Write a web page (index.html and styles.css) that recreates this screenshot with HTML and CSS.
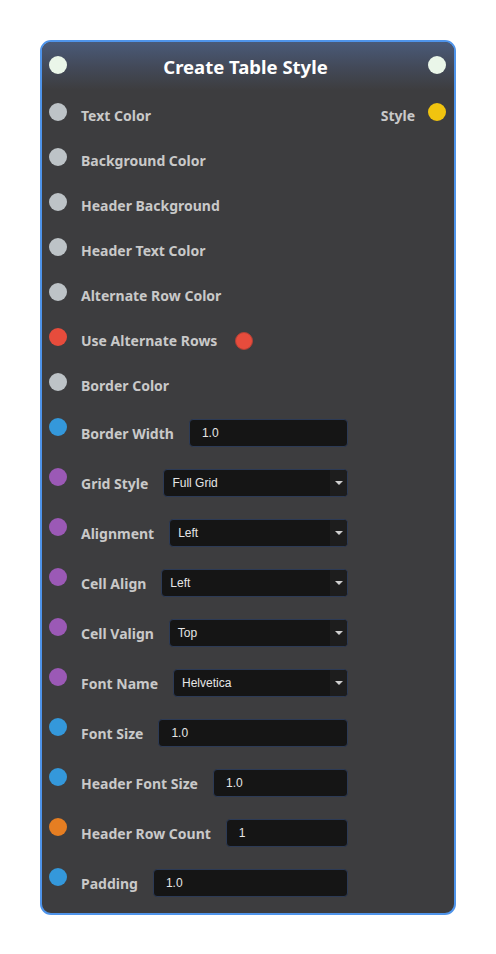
FILE: index.html
```html
<!DOCTYPE html>
<html>
<head>
<meta charset="utf-8">
<link rel="stylesheet" href="styles.css">
</head>
<body>
<div class="node">
  <div class="header">
    <span class="sock sock-head"></span>
    <span class="title">Create Table Style</span>
    <span class="sock sock-head"></span>
  </div>
  <div class="body">
    <div class="row">
      <span class="sock grey"></span><span class="label">Text Color</span>
      <span class="out"><span class="label">Style</span><span class="sock yellow"></span></span>
    </div>
    <div class="row"><span class="sock grey"></span><span class="label">Background Color</span></div>
    <div class="row"><span class="sock grey"></span><span class="label">Header Background</span></div>
    <div class="row"><span class="sock grey"></span><span class="label">Header Text Color</span></div>
    <div class="row"><span class="sock grey"></span><span class="label">Alternate Row Color</span></div>
    <div class="row"><span class="sock red"></span><span class="label">Use Alternate Rows</span><span class="toggle"></span></div>
    <div class="row"><span class="sock grey"></span><span class="label">Border Color</span></div>

    <div class="row wrow"><span class="sock blue"></span><span class="label">Border Width</span><div class="field">1.0</div></div>
    <div class="row wrow"><span class="sock purple"></span><span class="label">Grid Style</span><div class="select"><span class="sel-text">Full Grid</span><span class="caret"></span></div></div>
    <div class="row wrow"><span class="sock purple"></span><span class="label">Alignment</span><div class="select"><span class="sel-text">Left</span><span class="caret"></span></div></div>
    <div class="row wrow"><span class="sock purple"></span><span class="label">Cell Align</span><div class="select"><span class="sel-text">Left</span><span class="caret"></span></div></div>
    <div class="row wrow"><span class="sock purple"></span><span class="label">Cell Valign</span><div class="select"><span class="sel-text">Top</span><span class="caret"></span></div></div>
    <div class="row wrow"><span class="sock purple"></span><span class="label">Font Name</span><div class="select"><span class="sel-text">Helvetica</span><span class="caret"></span></div></div>
    <div class="row wrow"><span class="sock blue"></span><span class="label">Font Size</span><div class="field">1.0</div></div>
    <div class="row wrow"><span class="sock blue"></span><span class="label">Header Font Size</span><div class="field">1.0</div></div>
    <div class="row wrow"><span class="sock orange"></span><span class="label">Header Row Count</span><div class="field">1</div></div>
    <div class="row wrow"><span class="sock blue"></span><span class="label">Padding</span><div class="field">1.0</div></div>
  </div>
</div>
</body>
</html>
```
FILE: styles.css
```css
html, body {
  margin: 0;
  padding: 0;
  background: #ffffff;
}
body {
  padding: 40px 0 0 40px;
  font-family: "Noto Sans", "DejaVu Sans", sans-serif;
}
.node {
  width: 412px;
  border: 2px solid #4f94ea;
  border-radius: 11px;
  background: #3d3d3f;
  overflow: hidden;
}
.header {
  height: 48px;
  display: flex;
  align-items: center;
  padding: 0 8px 0 7px;
  background: linear-gradient(to bottom, #4a5a78 0%, #434a5a 50%, #3d3d3f 100%);
}
.header .sock {
  margin-bottom: 2px;
}
.title {
  flex: 1;
  text-align: center;
  color: #ffffff;
  font-weight: bold;
  font-size: 18.5px;
  margin-top: 1px;
  padding-right: 4px;
}
.sock {
  flex: none;
  width: 18px;
  height: 18px;
  border-radius: 50%;
  display: inline-block;
}
.sock-head { background: #eaf6e9; }
.grey { background: #bdc3c7; }
.red { background: #e74c3c; }
.blue { background: #3498db; }
.purple { background: #9b59b6; }
.orange { background: #e67e22; }
.yellow { background: #f1c40f; }

.body {
  padding: 3px 0 5px 0;
}
.row {
  height: 45px;
  display: flex;
  align-items: center;
  padding: 0 8px 0 7px;
}
.row > .sock {
  margin-bottom: 8px;
}
.label {
  color: #c9c9c9;
  font-weight: bold;
  font-size: 14px;
  margin-left: 14px;
  white-space: nowrap;
}
.out {
  margin-left: auto;
  display: flex;
  align-items: center;
}
.out .label {
  margin-left: 0;
  margin-right: 13px;
}
.out .sock {
  margin-bottom: 8px;
}
.toggle {
  width: 16px;
  height: 16px;
  border-radius: 50%;
  background: #e74c3c;
  border: 1px solid #b04035;
  margin-left: 18px;
}
.wrow {
  height: 50px;
  padding-right: 106px;
}
.wrow > .sock {
  margin-bottom: 12px;
}
.field, .select {
  flex: 1;
  height: 26px;
  margin-left: 15px;
  background: #151515;
  border: 1px solid #2c3a55;
  border-radius: 4px;
  color: #e6e6e6;
  font-family: "Liberation Sans", Arial, sans-serif;
  font-size: 12px;
  display: flex;
  align-items: center;
  box-sizing: content-box;
}
.field {
  padding-left: 12px;
}
.select {
  overflow: hidden;
}
.sel-text {
  flex: 1;
  padding-left: 8px;
}
.caret {
  width: 17px;
  align-self: stretch;
  background: #1d1d1d;
  display: flex;
  align-items: center;
  justify-content: center;
}
.caret::after {
  content: "";
  width: 0;
  height: 0;
  border-left: 4px solid transparent;
  border-right: 4px solid transparent;
  border-top: 4px solid #cfcfcf;
}
```
